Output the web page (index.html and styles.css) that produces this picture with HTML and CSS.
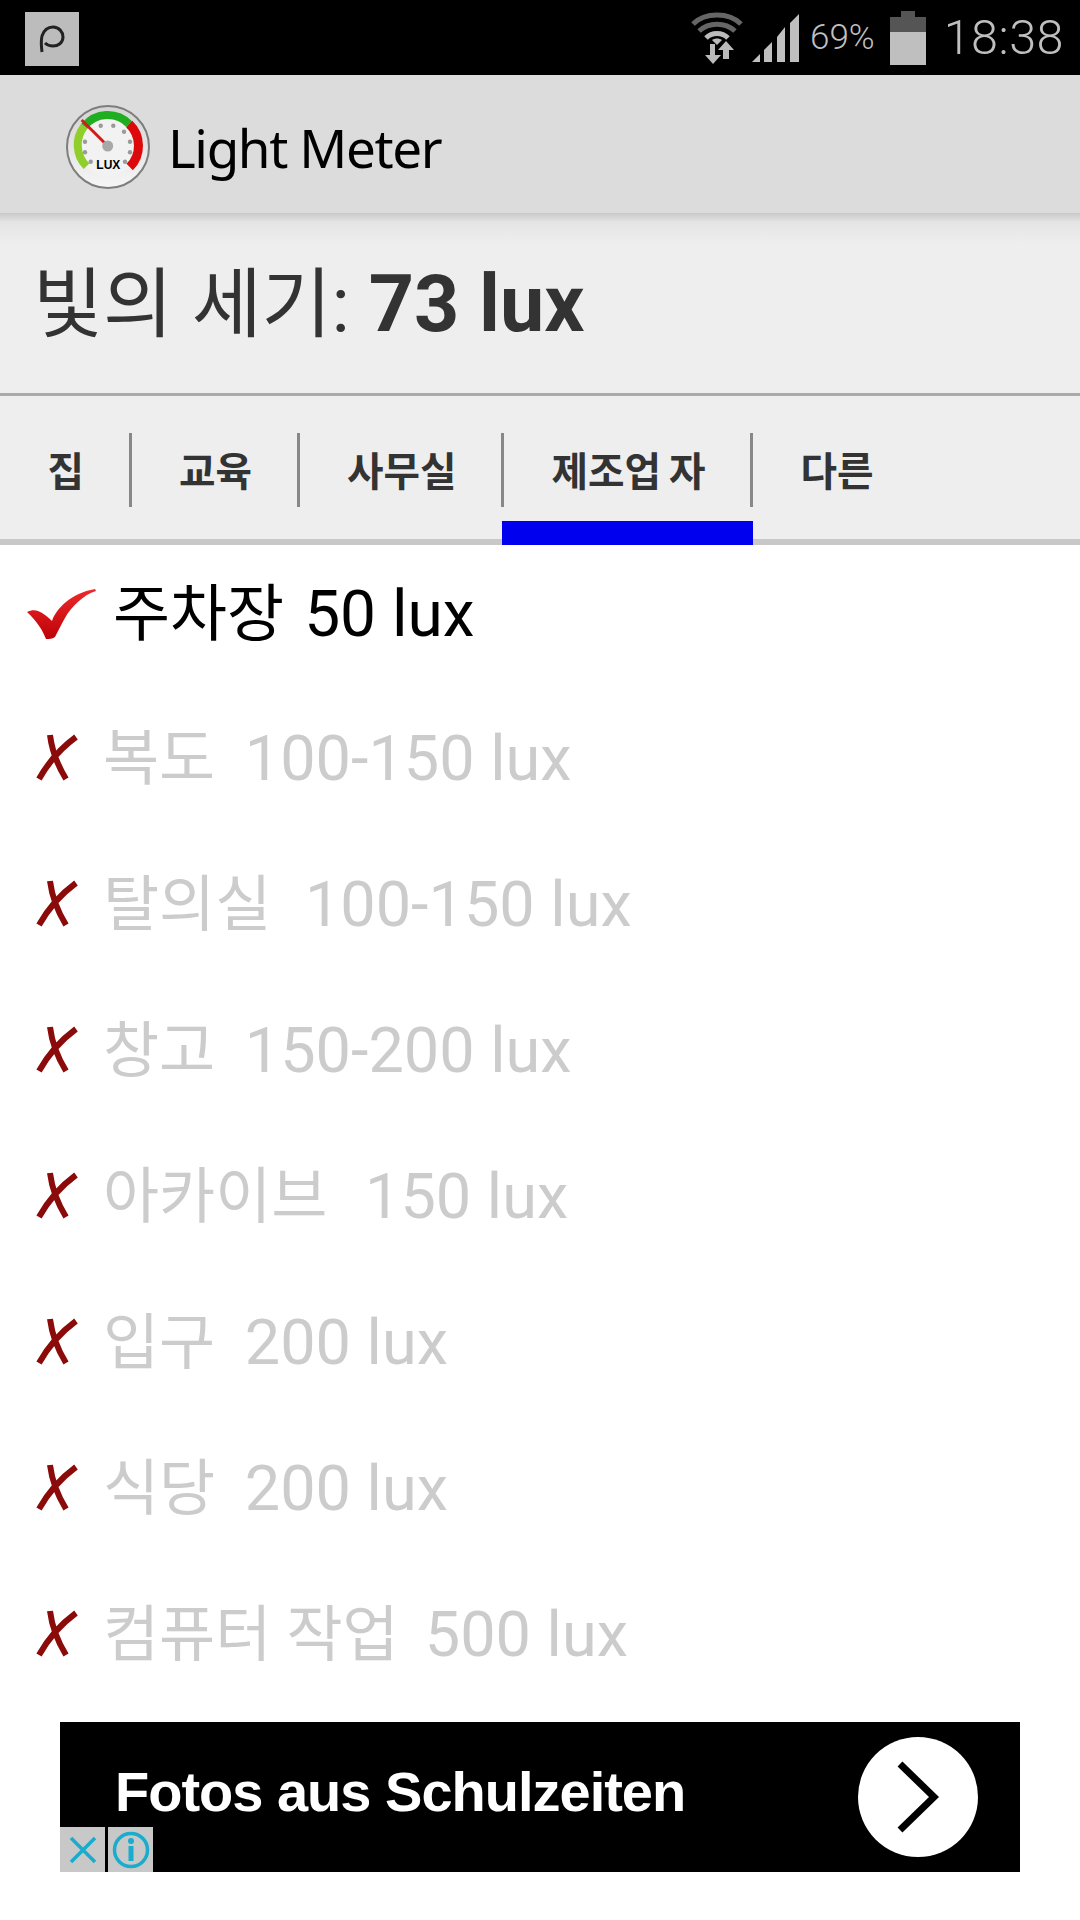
FILE: index.html
```html
<!DOCTYPE html>
<html lang="ko">
<head>
    <meta charset="UTF-8">
    <title>Light Meter</title>
    <link rel="stylesheet" href="styles.css">
</head>
<body>
    <svg class="defs" width="0" height="0">
        <symbol id="cross" viewBox="0 0 44 50">
            <path d="M15 2 C17 18 23 33 31 46 M41 4 C26 15 13 30 4 46" fill="none" stroke="#8b0a0a" stroke-width="6"/>
        </symbol>
        <linearGradient id="checkGrad" x1="0" y1="0" x2="0" y2="1">
            <stop offset="0" stop-color="#ee2a2a"/>
            <stop offset="1" stop-color="#bd0208"/>
        </linearGradient>
        <linearGradient id="faceGrad" x1="0" y1="0" x2="0" y2="1">
            <stop offset="0" stop-color="#d4d4d4"/>
            <stop offset="1" stop-color="#f6f6f6"/>
        </linearGradient>
    </svg>

    <div class="status-bar">
        <div class="notif-icon">
            <svg width="54" height="54" viewBox="0 0 54 54"><path d="M17 40 C16 32 16 28 17 24 C19 18 23 15 28 15 C34 15 38 20 38 25 C38 31 33 34 28 34 C25 34 22 33 20 31" fill="none" stroke="#222" stroke-width="3"/></svg>
        </div>
        <div class="status-right">
            <svg class="wifi" width="54" height="54" viewBox="0 0 54 54">
                <path d="M3 13 C15 1 39 1 51 13" fill="none" stroke="#666" stroke-width="5"/>
                <path d="M9 20 C19 11 35 11 45 20" fill="none" stroke="#666" stroke-width="5"/>
                <path d="M16 27 C22 21 32 21 38 27" fill="none" stroke="#bbb" stroke-width="5"/>
                <path d="M22 29 C25 27 29 27 32 29 L27 34 Z" fill="#bbb"/>
                <path d="M20 33 H25 V44 H31 L23 53 L15 44 H20 Z" fill="#bbb"/>
                <path d="M36 30 L44 39 H39 V48 H33 V39 H28 Z" fill="#bbb"/>
            </svg>
            <svg class="signal" width="50" height="50" viewBox="0 0 50 50">
                <path d="M1 49 L9 41 V49 Z M13 37 L21 29 V49 H13 Z M26 24 L34 14 V49 H26 Z M39 10 L48 1 V49 H39 Z" fill="#bfbfbf"/>
            </svg>
            <span class="battery-pct">69%</span>
            <div class="battery"><div class="battery-fill"></div></div>
            <span class="clock">18:38</span>
        </div>
    </div>

    <div class="action-bar">
        <svg class="app-icon" width="86" height="86" viewBox="0 0 86 86">
            <circle cx="43" cy="43" r="41" fill="url(#faceGrad)" stroke="#7d7d7d" stroke-width="2"/>
            <circle cx="43" cy="41" r="31" fill="#f2f2f2"/>
            <path d="M21.5 62.2 A30 30 0 0 1 19.3 22.3" fill="none" stroke="#8fce2b" stroke-width="8"/>
            <path d="M19.3 22.3 A30 30 0 0 1 64.2 20.1" fill="none" stroke="#1fae1f" stroke-width="8"/>
            <path d="M64.2 20.1 A30 30 0 0 1 64.7 63" fill="none" stroke="#dc0a0a" stroke-width="9"/>
            <g fill="#9a9a9a">
                <circle cx="20" cy="37.7" r="2.2"/><circle cx="20" cy="48.3" r="2.2"/><circle cx="25.7" cy="57.7" r="2.2"/>
                <circle cx="35.7" cy="21.7" r="2.2"/><circle cx="48.3" cy="21.7" r="2.2"/><circle cx="59" cy="27.7" r="2.2"/>
                <circle cx="65" cy="37.7" r="2.2"/><circle cx="65" cy="48.3" r="2.2"/><circle cx="60" cy="57.7" r="2.2"/>
            </g>
            <text class="lux-label" x="43.3" y="65.3" text-anchor="middle">LUX</text>
            <path d="M16.7 16 L40 39.3" stroke="#d61a1a" stroke-width="3"/>
            <circle cx="42.7" cy="42" r="5.5" fill="#a8a8a8"/>
        </svg>
        <span class="app-title">Light Meter</span>
    </div>

    <div class="reading">빛의 세기: <b>73 lux</b></div>

    <div class="tabs">
        <div class="tab">집</div>
        <div class="tab">교육</div>
        <div class="tab">사무실</div>
        <div class="tab active">제조업 자</div>
        <div class="tab last">다른</div>
    </div>

    <ul class="lux-list">
        <li class="lux-row ok">
            <svg class="check" width="70" height="54" viewBox="0 0 70 54">
                <path d="M0 27 C4 25 8 25 11 26 C16 28 21 32 25 36 C29 24 44 8 68 4 L69 6 C56 10 44 22 38 33 C34 40 31 46 28 52 C25 54 22 54 19 54 C16 46 10 36 0 27 Z" fill="url(#checkGrad)"/>
            </svg>
            <span class="label"><span class="name">주차장</span><span class="val">50 lux</span></span>
        </li>
        <li class="lux-row"><svg class="cross" width="44" height="50"><use href="#cross"/></svg><span class="label"><span class="name">복도</span><span class="val">100-150 lux</span></span></li>
        <li class="lux-row"><svg class="cross" width="44" height="50"><use href="#cross"/></svg><span class="label"><span class="name">탈의실</span><span class="val far">100-150 lux</span></span></li>
        <li class="lux-row"><svg class="cross" width="44" height="50"><use href="#cross"/></svg><span class="label"><span class="name">창고</span><span class="val">150-200 lux</span></span></li>
        <li class="lux-row"><svg class="cross" width="44" height="50"><use href="#cross"/></svg><span class="label"><span class="name">아카이브</span><span class="val farther">150 lux</span></span></li>
        <li class="lux-row"><svg class="cross" width="44" height="50"><use href="#cross"/></svg><span class="label"><span class="name">입구</span><span class="val">200 lux</span></span></li>
        <li class="lux-row"><svg class="cross" width="44" height="50"><use href="#cross"/></svg><span class="label"><span class="name">식당</span><span class="val">200 lux</span></span></li>
        <li class="lux-row"><svg class="cross" width="44" height="50"><use href="#cross"/></svg><span class="label"><span class="name">컴퓨터 작업</span><span class="val near">500 lux</span></span></li>
    </ul>

    <div class="ad">
        <span class="ad-text">Fotos aus Schulzeiten</span>
        <div class="ad-arrow">
            <svg width="44" height="72" viewBox="0 0 44 72"><path d="M4 3 L38 36 L4 69" fill="none" stroke="#000" stroke-width="7"/></svg>
        </div>
        <div class="ad-badges">
            <div class="ad-badge">
                <svg width="30" height="30" viewBox="0 0 30 30"><path d="M3 3 L27 27 M27 3 L3 27" stroke="#1aaccc" stroke-width="3.5"/></svg>
            </div>
            <div class="ad-badge">
                <svg width="40" height="40" viewBox="0 0 40 40"><circle cx="20" cy="20" r="16.5" fill="none" stroke="#1aaccc" stroke-width="3.5"/><circle cx="20" cy="11" r="3" fill="#1aaccc"/><path d="M20 16 V31" stroke="#1aaccc" stroke-width="5"/></svg>
            </div>
        </div>
    </div>
</body>
</html>
```

FILE: styles.css
```css
body {
    margin: 0;
    background: #fff;
    font-family: Roboto, "Noto Sans CJK KR", sans-serif;
    width: 1080px;
    height: 1920px;
    overflow: hidden;
}
.defs {
    position: absolute;
}

.status-bar {
    height: 75px;
    background: #000;
    display: flex;
    align-items: center;
    justify-content: space-between;
    padding: 0 16px 0 25px;
    color: #bfbfbf;
}
.notif-icon {
    width: 54px;
    height: 54px;
    margin-top: 3px;
    background: #bcbcbc;
}
.notif-icon svg {
    display: block;
}
.status-right {
    display: flex;
    align-items: center;
}
.wifi {
    margin-right: 7px;
}
.signal {
    margin-right: 9px;
}
.battery-pct {
    font-size: 35px;
    font-weight: 300;
    margin-right: 15px;
}
.battery {
    position: relative;
    width: 36px;
    height: 48px;
    margin-top: 6px;
    background: #555;
    margin-right: 18px;
}
.battery:before {
    content: "";
    position: absolute;
    top: -6px;
    left: 11px;
    width: 14px;
    height: 6px;
    background: #555;
}
.battery-fill {
    position: absolute;
    left: 0;
    right: 0;
    bottom: 0;
    height: 33px;
    background: #bfbfbf;
}
.clock {
    font-size: 48.5px;
    font-weight: 300;
    letter-spacing: 0.5px;
}

.action-bar {
    height: 138px;
    background: #dcdcdc;
    display: flex;
    align-items: center;
    padding: 6px 0 0 65px;
    box-sizing: border-box;
}
.app-title {
    font-family: "Noto Sans", sans-serif;
    font-size: 53px;
    letter-spacing: -1.4px;
    color: #000;
    margin-left: 17px;
}
.lux-label {
    font-family: "Liberation Sans", sans-serif;
    font-size: 12px;
    font-weight: bold;
}

.reading {
    height: 183px;
    box-sizing: border-box;
    padding: 41px 0 0 33px;
    font-size: 76px;
    line-height: 100px;
    color: #333;
    background: linear-gradient(to bottom, #c9c9c9 0, #e4e4e4 9px, #eee 30px);
    border-bottom: 3px solid #aaa;
}
.reading b {
    font-size: 79px;
    font-weight: 700;
}

.tabs {
    display: flex;
    height: 149px;
    box-sizing: border-box;
    background: #eee;
    border-bottom: 6px solid #c8c8c8;
    padding-top: 37px;
}
.tab {
    position: relative;
    height: 74px;
    line-height: 80px;
    padding: 0 44.5px 0 47.5px;
    font-size: 39.7px;
    word-spacing: -2px;
    font-weight: 700;
    color: #333;
    border-right: 3px solid #888;
    white-space: nowrap;
}
.tab.last {
    border-right: none;
}
.tab.active:after {
    content: "";
    position: absolute;
    left: -2px;
    right: -3px;
    top: 88px;
    height: 24px;
    background: #0000ee;
}

.lux-list {
    list-style: none;
    margin: 0;
    padding: 0;
    display: flex;
    flex-direction: column;
    gap: 12px;
}
.lux-row {
    height: 134px;
    display: flex;
    align-items: center;
    padding-left: 35px;
    color: #ccc;
}
.label {
    margin: -10px 0 0 24px;
}
.name {
    font-size: 61px;
}
.val {
    font-size: 63px;
    margin-left: 29.5px;
}
.val.far {
    margin-left: 33.5px;
}
.val.farther {
    margin-left: 37.5px;
}
.val.near {
    margin-left: 26px;
}
.lux-row.ok {
    color: #000;
    padding-left: 27px;
}
.lux-row.ok .label {
    margin: -7px 0 0 16px;
}
.lux-row.ok .name {
    font-size: 62px;
}
.lux-row.ok .val {
    font-size: 64px;
    margin-left: 20px;
}

.ad {
    position: relative;
    width: 960px;
    height: 150px;
    margin: 21px 0 0 60px;
    background: #000;
    display: flex;
    align-items: center;
    justify-content: space-between;
    padding: 0 42px 0 55px;
    box-sizing: border-box;
}
.ad-text {
    font-family: "Liberation Sans", sans-serif;
    font-weight: bold;
    font-size: 56px;
    letter-spacing: -1px;
    color: #fff;
    margin-top: -12px;
}
.ad-arrow {
    width: 120px;
    height: 120px;
    border-radius: 50%;
    background: #fff;
    display: flex;
    align-items: center;
    justify-content: center;
}
.ad-badges {
    position: absolute;
    left: 0;
    bottom: 0;
    display: flex;
    gap: 3px;
}
.ad-badge {
    width: 45px;
    height: 45px;
    background: #c8c8c8;
    display: flex;
    align-items: center;
    justify-content: center;
}
```
